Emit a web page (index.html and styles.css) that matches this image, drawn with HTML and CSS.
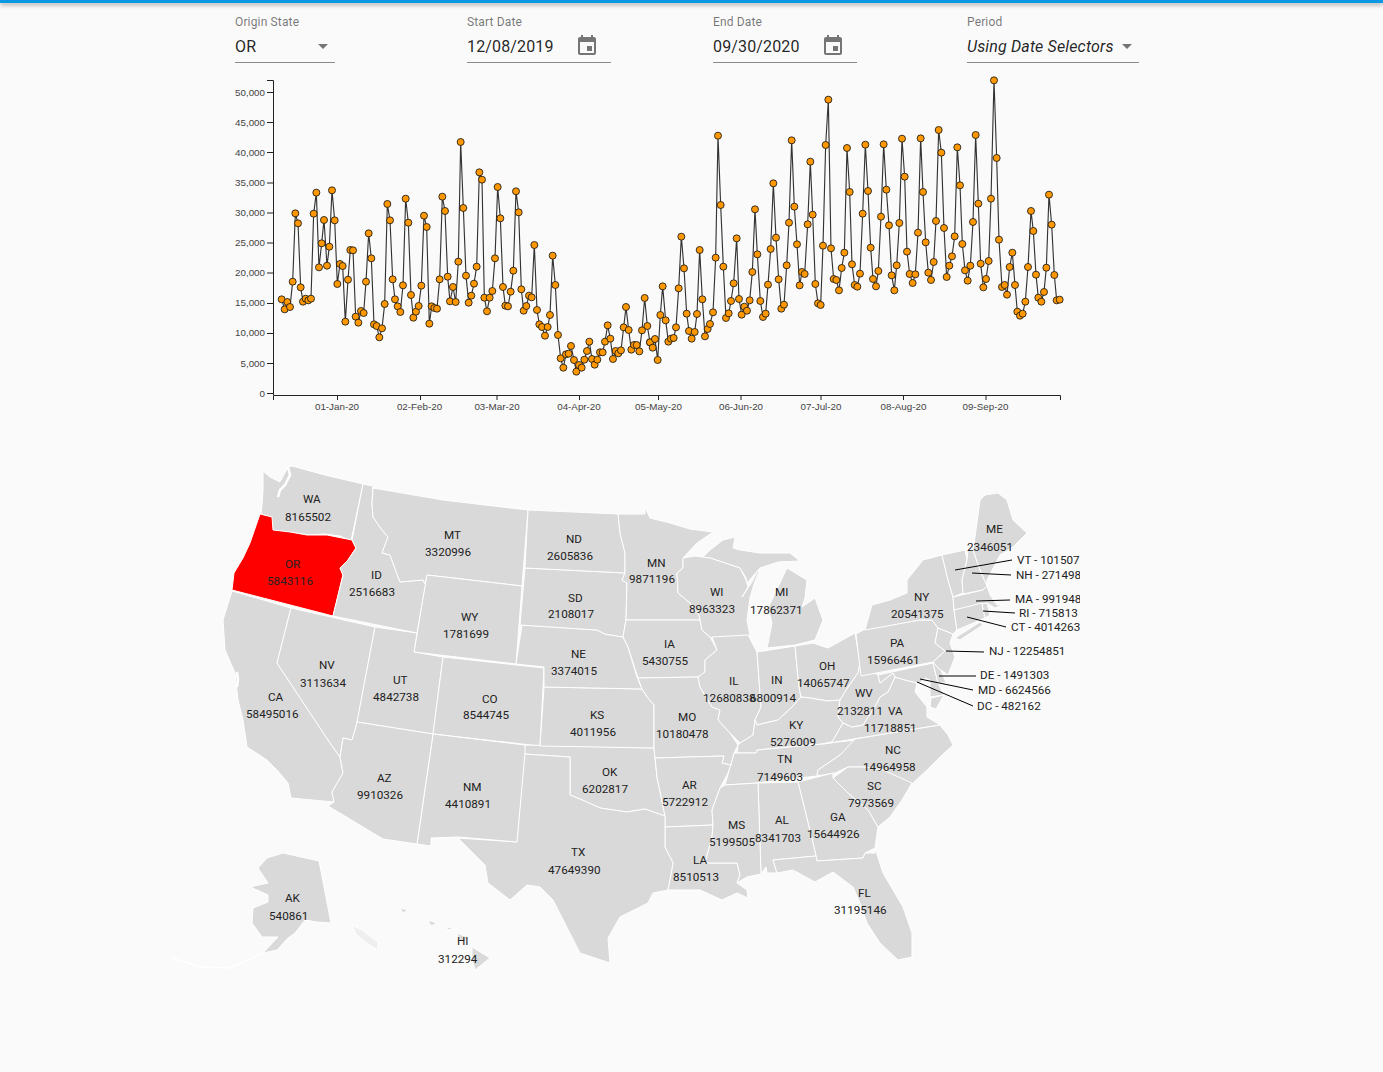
FILE: index.html
```html
<!DOCTYPE html>
<html lang="en">
<head>
<meta charset="utf-8">
<title>State dashboard</title>
<link rel="stylesheet" href="styles.css">
</head>
<body>
<div class="topbar"></div>
<main class="page">
  <section class="filters">
    <div class="field field-state">
      <label class="field-label">Origin State</label>
      <div class="field-control"><span class="field-value">OR</span><span class="caret"></span></div>
    </div>
    <div class="field field-date">
      <label class="field-label">Start Date</label>
      <div class="field-control"><span class="field-value">12/08/2019</span>
        <svg class="cal" viewBox="0 0 24 24"><path d="M17 12h-5v5h5v-5zM16 1v2H8V1H6v2H5c-1.11 0-1.99.9-1.99 2L3 19c0 1.1.89 2 2 2h14c1.1 0 2-.9 2-2V5c0-1.1-.9-2-2-2h-1V1h-2zm3 18H5V8h14v11z"/></svg></div>
    </div>
    <div class="field field-date">
      <label class="field-label">End Date</label>
      <div class="field-control"><span class="field-value">09/30/2020</span>
        <svg class="cal" viewBox="0 0 24 24"><path d="M17 12h-5v5h5v-5zM16 1v2H8V1H6v2H5c-1.11 0-1.99.9-1.99 2L3 19c0 1.1.89 2 2 2h14c1.1 0 2-.9 2-2V5c0-1.1-.9-2-2-2h-1V1h-2zm3 18H5V8h14v11z"/></svg></div>
    </div>
    <div class="field field-period">
      <label class="field-label">Period</label>
      <div class="field-control"><span class="field-value italic">Using Date Selectors</span><span class="caret"></span></div>
    </div>
  </section>

  <svg class="chart" width="850" height="350" viewBox="230 70 850 350">
    <defs>
      <marker id="dot" markerUnits="userSpaceOnUse" markerWidth="30" markerHeight="30" refX="15" refY="15"><circle class="dot" cx="15" cy="15" r="10.5"/></marker>
    </defs>
    <g class="axis">
      <path d="M267 80.5H273.5V395M273.5 400V395.5H1060.5V400"/>
      <path d="M267 92.5H273M267 122.5H273M267 152.5H273M267 183H273M267 213H273M267 243H273M267 273H273M267 303.5H273M267 333.5H273M267 363.5H273M267 393.5H273"/>
      <path d="M337.5 395V400M420.5 395V400M497 395V400M579.5 395V400M658.5 395V400M741 395V400M821 395V400M903.5 395V400M986 395V400"/>
    </g>
    <g class="ticks-y">
      <text x="265" y="96">50,000</text><text x="265" y="126">45,000</text><text x="265" y="156">40,000</text><text x="265" y="186">35,000</text><text x="265" y="216">30,000</text><text x="265" y="246">25,000</text><text x="265" y="276">20,000</text><text x="265" y="306">15,000</text><text x="265" y="336">10,000</text><text x="265" y="367">5,000</text><text x="265" y="397">0</text>
    </g>
    <g class="ticks-x">
      <text x="337" y="410">01-Jan-20</text><text x="419.500" y="410">02-Feb-20</text><text x="497" y="410">03-Mar-20</text><text x="579" y="410">04-Apr-20</text><text x="658.500" y="410">05-May-20</text><text x="741" y="410">06-Jun-20</text><text x="821" y="410">07-Jul-20</text><text x="903.500" y="410">08-Aug-20</text><text x="985.500" y="410">09-Sep-20</text>
    </g>
    <g transform="translate(230 70) scale(.33333)">
      <polyline class="series" points="155,688 164,718 172,696 180,711 188,635 196,430 204,460 212,652 219,695 227,686 235,691 243,686 251,431 259,368 267,592 275,520 282,450 291,587 298,530 306,361 314,451 322,642 330,582 338,588 346,755 354,629 361,540 369,541 377,740 385,758 393,723 401,729 408,635 416,490 424,565 432,763 440,768 448,802 456,775 464,702 472,402 480,451 488,628 495,688 503,709 511,726 519,646 527,386 535,458 543,675 550,743 558,725 566,708 574,647 582,437 590,471 598,761 605,709 613,714 621,716 629,628 637,380 645,423 653,620 660,694 669,651 677,696 685,575 692,216 700,414 708,617 716,698 724,677 732,641 740,590 748,307 756,329 763,683 771,724 779,683 787,663 795,565 803,351 811,445 819,651 826,707 834,709 842,665 850,602 858,364 866,427 874,658 881,722 889,708 897,677 905,682 913,525 921,720 928,763 936,771 945,797 953,771 960,735 968,557 976,645 984,795 992,865 1000,893 1008,853 1016,851 1023,828 1032,870 1039,905 1047,885 1055,893 1063,869 1071,843 1078,815 1086,867 1094,884 1102,869 1110,847 1118,847 1125,815 1133,766 1141,806 1149,867 1157,843 1165,850 1173,841 1181,772 1188,711 1196,780 1204,839 1212,825 1220,825 1228,844 1236,781 1244,684 1252,768 1260,817"/>
    </g>
    <g transform="translate(650 70) scale(.33333)">
      <polyline class="series" points="0,817 8,833 15,807 23,870 31,735 38,649 47,751 55,815 63,806 71,804 78,772 86,655 94,500 102,595 110,731 117,783 125,806 134,786 141,732 149,540 157,688 165,799 173,777 180,762 189,727 197,563 204,197 212,405 220,590 228,744 236,730 243,693 251,640 260,505 267,687 275,734 283,710 291,722 299,691 307,606 315,418 322,553 331,693 339,741 347,731 354,644 362,537 370,340 378,503 386,628 394,716 402,704 410,586 417,458 425,211 433,410 441,523 449,646 456,606 464,612 473,463 481,275 488,434 496,642 504,700 512,705 519,527 527,225 535,89 543,535 551,627 559,630 567,661 575,594 583,548 591,234 599,366 606,583 614,645 622,650 630,611 638,431 646,224 654,363 662,533 669,627 678,649 685,603 693,440 701,223 709,359 717,466 725,616 733,661 740,586 748,459 756,206 764,320 771,545 779,612 788,639 796,613 804,488 812,205 819,366 827,517 835,608 843,630 851,576 858,453 866,180 874,248 882,474 890,621 898,587 906,559 914,499 922,232 930,346 937,522 945,601 953,632 961,587 969,456 977,195 985,401 992,581 1000,652 1008,627 1016,573 1023,386 1032,31 1040,264 1047,509 1056,651 1064,645 1071,674 1079,591 1087,548 1095,645 1102,725 1110,737 1118,731 1126,695 1134,591 1143,423 1150,483 1158,614 1165,683 1174,695 1182,666 1189,593 1197,374 1205,464 1213,615 1220,691 1229,689"/>
    </g>
  </svg>

  <svg class="map" width="920" height="560" viewBox="160 460 920 560">
    <g class="states">
      <polygon points="263,471 270,477 280,482 288,467 292,466 325,475 363,484 351,541 340,536 325,534 310,535 295,533 285,532 273,531 272,520 268,516 261,514 262,505 263,490"/>
      <polygon class="selected" points="260,514 272,517 273,530 290,532 307,535 327,535 352,540 356,548 348,560 340,568 343,575 333,616 232,590 234,573 243,558 250,543"/>
      <polygon points="232,591 291,608 277,663 328,740 340,757 343,773 332,792 334,802 291,798 288,783 277,770 267,760 247,747 243,720 238,700 235,673 225,650 223,620"/>
      <polygon points="291,608 375,627 357,723 355,730 352,740 343,738 340,757 328,740 277,663"/>
      <polygon points="363,484 373,486 372,503 373,517 382,530 388,537 382,553 390,555 398,577 400,582 423,580 425,584 427,576 417,633 333,616 343,575 340,568 348,560 356,548 352,540"/>
      <polygon points="373,488 443,500 528,510 522,586 427,575 425,584 423,580 400,582 398,577 390,555 382,553 388,537 382,530 373,517 372,503"/>
      <polygon points="427,575 522,586 516,664 414,652"/>
      <polygon points="375,627 417,633 414,652 443,657 433,734 357,722"/>
      <polygon points="443,657 544,668 540,746 433,734"/>
      <polygon points="525,745 654,748 655,758 657,777 665,816 645,809 627,812 600,808 580,799 570,795 570,757 524,754"/>
      <polygon points="544,687 642,689 648,698 654,705 654,748 540,746"/>
      <polygon points="522,625 597,630 605,634 623,637 628,647 637,677 642,689 544,687 544,667 516,664"/>
      <polygon points="525,568 625,573 622,580 627,583 626,620 623,637 605,634 597,630 520,625"/>
      <polygon points="528,510 618,514 620,533 625,553 625,573 525,568"/>
      <polygon points="618,514 645,514 645,507 650,518 670,523 690,529 713,532 697,543 683,558 683,568 677,573 678,593 690,603 699,615 700,620 626,620 627,583 622,580 625,573 625,553 620,533"/>
      <polygon points="626,620 700,620 702,630 710,637 717,650 705,660 705,672 698,677 638,678 628,647 623,637"/>
      <polygon points="638,678 698,677 700,687 712,707 720,710 718,720 730,733 738,745 734,753 731,765 722,763 724,756 655,758 654,748 654,705 648,698 642,689"/>
      <polygon points="655,758 724,756 722,763 731,765 728,773 720,788 712,810 713,825 665,827 665,816 657,777"/>
      <polygon points="665,827 713,825 712,837 705,863 737,863 740,875 737,883 747,890 748,898 737,893 722,900 700,890 668,890 673,863 665,847"/>
      <polygon points="524,754 570,757 570,795 580,799 600,808 627,812 645,809 665,816 665,847 673,863 668,890 653,893 648,903 620,917 608,938 610,963 580,953 553,900 540,887 527,885 510,900 488,883 485,865 458,838 517,842"/>
      <polygon points="433,734 525,745 525,753 517,842 458,837 431,838 431,846 417,844"/>
      <polygon points="357,722 433,734 417,844 383,839 328,806 334,802 332,792 343,773 340,757 343,738 352,740 355,730"/>
      <polygon points="702,558 710,550 723,540 735,537 733,548 740,550 760,553 790,553 800,561 778,562 760,568 747,583 746,578 740,568 710,558"/>
      <polygon points="683,558 695,556 710,558 740,568 746,580 748,587 742,597 752,582 757,572 760,569 754,584 750,598 747,620 750,636 712,638 710,637 702,630 700,620 699,615 690,603 678,593 677,573 683,568"/>
      <polygon points="787,568 807,580 805,598 802,607 815,598 823,620 815,640 795,645 767,648 772,623 768,608 778,587"/>
      <polygon points="712,637 748,635 757,652 761,707 755,720 753,735 740,743 730,733 718,720 720,710 712,707 700,687 698,677 705,672 705,660 717,650"/>
      <polygon points="757,652 795,646 799,687 801,697 792,707 778,720 757,725 755,720 761,707"/>
      <polygon points="795,646 813,643 828,648 855,633 860,663 858,673 848,687 840,700 828,701 810,698 801,697 799,687"/>
      <polygon points="801,697 810,698 828,701 840,700 838,717 843,723 832,742 822,744 757,750 756,753 737,753 738,745 740,743 753,735 755,720 757,725 778,720 792,707"/>
      <polygon points="734,753 756,753 757,750 822,744 855,740 840,755 818,770 817,776 757,783 725,785 730,767 731,765"/>
      <polygon points="823,744 832,742 843,723 852,727 863,725 877,703 880,697 888,692 895,677 905,680 917,683 915,692 927,707 927,717 940,725"/>
      <polygon points="860,663 878,675 880,683 893,673 895,677 888,692 880,697 877,703 863,725 852,727 843,723 838,717 840,700 848,687 858,673"/>
      <polygon points="856,634 865,629 920,620 932,620 938,628 935,643 945,651 933,662 861,676"/>
      <polygon points="878,675 933,663 938,683 944,695 930,697 930,680 925,678 920,683 917,683 905,680 895,677 893,673 880,683"/>
      <polygon points="944,695 931,698 930,707 936,709"/>
      <polygon points="933,663 937,660 946,683 938,683"/>
      <polygon points="938,628 953,634 950,643 955,657 948,675 938,668 933,662 945,651 935,643"/>
      <polygon points="942,555 948,580 953,597 954,610 957,630 953,634 938,628 932,620 920,620 865,630 872,605 890,600 907,593 907,580 923,560"/>
      <polygon points="955,638 980,622 983,625 960,640"/>
      <polygon points="942,555 965,550 967,560 962,580 963,593 953,597 948,580"/>
      <polygon points="968,549 973,550 980,570 987,586 983,590 963,594 962,580 967,560"/>
      <polygon points="973,550 975,537 980,500 985,495 998,493 1007,500 1013,520 1027,533 1013,547 1000,555 987,580 987,586 980,570"/>
      <polygon points="953,597 983,590 987,586 990,595 997,605 1004,604 995,608 987,603 954,610"/>
      <polygon points="954,610 982,603 985,618 957,630"/>
      <polygon points="982,604 987,603 990,615 985,618"/>
      <polygon points="855,739 940,725 948,735 953,745 940,757 927,770 912,784 883,770 863,767 848,767 835,773 817,776 818,770 840,755"/>
      <polygon points="833,778 848,767 863,767 883,770 912,783 902,800 890,817 878,827 868,810 848,793"/>
      <polygon points="798,782 833,773 833,778 848,793 868,810 878,827 875,848 865,853 863,858 817,861 813,843"/>
      <polygon points="758,783 798,782 813,843 816,856 773,860 777,873 767,873 766,867 761,874"/>
      <polygon points="725,785 758,783 761,874 747,877 737,883 740,875 737,863 705,863 712,837 713,825 712,810 720,788"/>
      <polygon points="773,860 816,856 817,861 863,858 865,853 875,853 875,848 883,873 903,907 912,933 912,957 898,960 880,943 867,923 860,903 853,887 833,872 815,882 793,870 777,873"/>
      <polygon points="283,853 319,861 331,923 317,922 305,920 295,933 288,938 277,950 263,953 278,937 262,937 252,923 253,908 268,902 268,895 250,887 268,883 258,868 267,858"/>
      <polygon class="faint" points="352,925 362,930 378,942 378,950 366,943 356,934"/>
      <polygon points="472,947 490,958 475,970 472,960"/>
      <polygon points="457,933 467,937 465,942 459,940"/>
      <polygon points="447,927 455,929 447,930"/>
      <polygon points="428,920 437,923 431,926"/>
      <polygon points="400,908 408,910 403,913"/>
    </g>
    <path class="coast" d="M288,467 290,475 285,485 280,490 278,497"/>
    <path class="coast" d="M237,672 238,680 237,687"/>
    <path class="tail" d="M263,953 230,968 200,967 172,958"/>
    <g class="leaders">
      <path d="M955,570 1012,560M972,573 1011,575M976,601 1010,600M983,611 1015,613M967,617 1006,627M946,651 984,652M939,676 976,676M920,679 973,690M917,682 973,706"/>
    </g>
    <g class="labels">
      <text x="303" y="503">WA</text><text x="285" y="521">8165502</text>
      <text x="285" y="568">OR</text><text x="267" y="585">5843116</text>
      <text x="371" y="579">ID</text><text x="349" y="596">2516683</text>
      <text x="444" y="539">MT</text><text x="425" y="556">3320996</text>
      <text x="566" y="543">ND</text><text x="547" y="560">2605836</text>
      <text x="647" y="567">MN</text><text x="629" y="583">9871196</text>
      <text x="710" y="596">WI</text><text x="689" y="613">8963323</text>
      <text x="775" y="596">MI</text><text x="750" y="614">17862371</text>
      <text x="568" y="602">SD</text><text x="548" y="618">2108017</text>
      <text x="461" y="621">WY</text><text x="443" y="638">1781699</text>
      <text x="571" y="658">NE</text><text x="551" y="675">3374015</text>
      <text x="664" y="648">IA</text><text x="642" y="665">5430755</text>
      <text x="729" y="685">IL</text><text x="703" y="702">12680838</text>
      <text x="771" y="684">IN</text><text x="750" y="702">6800914</text>
      <text x="819" y="670">OH</text><text x="797" y="687">14065747</text>
      <text x="319" y="669">NV</text><text x="300" y="687">3113634</text>
      <text x="393" y="684">UT</text><text x="373" y="701">4842738</text>
      <text x="482" y="703">CO</text><text x="463" y="719">8544745</text>
      <text x="268" y="701">CA</text><text x="246" y="718">58495016</text>
      <text x="590" y="719">KS</text><text x="570" y="736">4011956</text>
      <text x="678" y="721">MO</text><text x="656" y="738">10180478</text>
      <text x="789" y="729">KY</text><text x="770" y="746">5276009</text>
      <text x="777" y="763">TN</text><text x="757" y="781">7149603</text>
      <text x="888" y="715">VA</text><text x="864" y="732">11718851</text>
      <text x="855" y="697">WV</text><text x="837" y="715">2132811</text>
      <text x="885" y="754">NC</text><text x="863" y="771">14964958</text>
      <text x="867" y="790">SC</text><text x="848" y="807">7973569</text>
      <text x="830" y="821">GA</text><text x="807" y="838">15644926</text>
      <text x="775" y="824">AL</text><text x="755" y="842">8341703</text>
      <text x="728" y="829">MS</text><text x="709" y="846">5199505</text>
      <text x="682" y="789">AR</text><text x="662" y="806">5722912</text>
      <text x="602" y="776">OK</text><text x="582" y="793">6202817</text>
      <text x="693" y="864">LA</text><text x="673" y="881">8510513</text>
      <text x="571" y="856">TX</text><text x="548" y="874">47649390</text>
      <text x="463" y="791">NM</text><text x="445" y="808">4410891</text>
      <text x="377" y="782">AZ</text><text x="357" y="799">9910326</text>
      <text x="858" y="897">FL</text><text x="834" y="914">31195146</text>
      <text x="285" y="902">AK</text><text x="269" y="920">540861</text>
      <text x="457" y="945">HI</text><text x="438" y="963">312294</text>
      <text x="986" y="533">ME</text><text x="967" y="551">2346051</text>
      <text x="914" y="601">NY</text><text x="891" y="618">20541375</text>
      <text x="890" y="647">PA</text><text x="867" y="664">15966461</text>
      <text x="1017" y="564">VT - 101507</text>
      <text x="1016" y="579">NH - 271498</text>
      <text x="1015" y="603">MA - 991948</text>
      <text x="1019" y="617">RI - 715813</text>
      <text x="1011" y="631">CT - 4014263</text>
      <text x="989" y="655">NJ - 12254851</text>
      <text x="980" y="679">DE - 1491303</text>
      <text x="978" y="694">MD - 6624566</text>
      <text x="977" y="710">DC - 482162</text>
    </g>
  </svg>
</main>
</body>
</html>
```

FILE: styles.css
```css
* { box-sizing: border-box; }
html, body { margin: 0; height: 100%; }
body {
  background: #fafafa;
  font-family: Roboto, "Liberation Sans", sans-serif;
  color: rgba(0, 0, 0, 0.87);
  overflow: hidden;
}
.topbar {
  height: 3px;
  background: #0a97e4;
  box-shadow: 0 2px 4px rgba(0, 0, 0, 0.35);
}
.page { display: flex; flex-direction: column; }
.filters {
  display: grid;
  grid-template-columns: 232px 246px 254px 172px;
  padding: 12px 0 0 235px;
}
.field { display: flex; flex-direction: column; }
.field-state { width: 100px; }
.field-date { width: 144px; }
.field-period { width: 172px; }
.field-label {
  font-size: 12px;
  line-height: 14px;
  letter-spacing: 0.15px;
  color: rgba(0, 0, 0, 0.54);
}
.field-control {
  display: flex;
  align-items: center;
  justify-content: space-between;
  height: 34px;
  padding-top: 1px;
  border-bottom: 1px solid rgba(0, 0, 0, 0.45);
  padding-right: 12px;
}
.field-value { font-size: 16px; letter-spacing: 0.15px; }
.italic { font-style: italic; }
.field-state .field-control { padding-right: 7px; padding-top: 2px; }
.field-period .field-control { padding-right: 7px; padding-top: 2px; }
.caret {
  width: 0;
  height: 0;
  border-left: 5px solid transparent;
  border-right: 5px solid transparent;
  border-top: 5px solid #757575;
}
.cal { width: 24px; height: 24px; fill: #757575; }

.chart { display: block; margin: 7px 0 0 230px; overflow: hidden; }
.axis path { fill: none; stroke: #222; stroke-width: 1; }
.ticks-y text, .ticks-x text {
  font-family: "Liberation Sans", Arial, sans-serif;
  font-size: 9.8px;
  fill: #444;
}
.ticks-y text { text-anchor: end; }
.ticks-x text { text-anchor: middle; }
.series {
  fill: none;
  stroke: #333;
  stroke-width: 3.4;
  marker-start: url(#dot);
  marker-mid: url(#dot);
  marker-end: url(#dot);
}
.dot { fill: #ff9800; stroke: #1a1a1a; stroke-width: 2.6; }

.map { display: block; margin: 40px 0 0 160px; }
.states polygon { fill: #d9d9d9; stroke: #fff; stroke-width: 1; stroke-linejoin: round; }
.states polygon.selected { fill: #ff0000; }
.states polygon.faint { fill: #efefef; }
.coast { fill: none; stroke: #fff; stroke-width: 2.5; }
.tail { fill: none; stroke: #fff; stroke-width: 1.5; }
.leaders path { fill: none; stroke: #000; stroke-width: 1; }
.labels text { font-family: Roboto, sans-serif; font-size: 11.7px; fill: #222; }
```
